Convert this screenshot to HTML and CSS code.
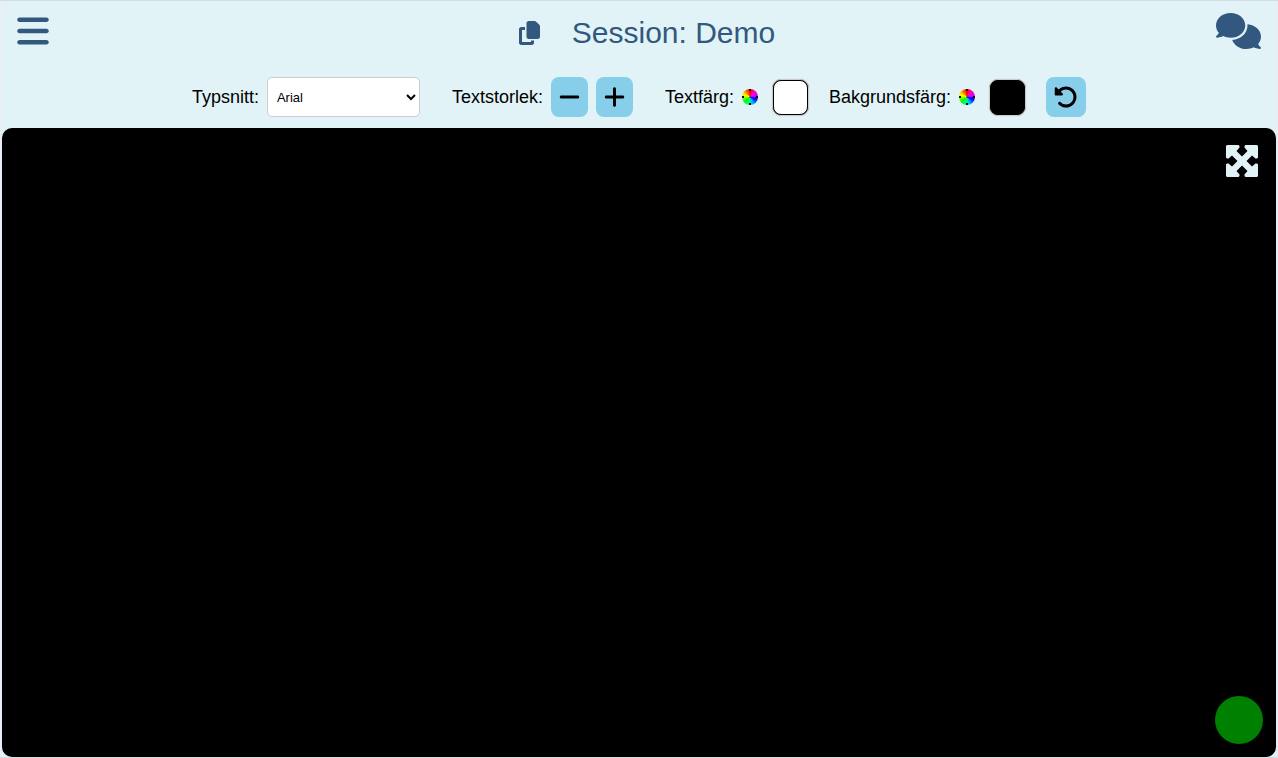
FILE: index.html
```html
<!DOCTYPE html>
<html lang="sv">
<head>
    <meta charset="utf-8">
    <meta name="viewport" content="width=device-width, initial-scale=1">
    <title>Session: Demo</title>
    <link rel="stylesheet" href="styles.css">
</head>
<body>
    <div class="page">
        <header class="header">
            <button class="iconButton" type="button" aria-label="Meny">
                <svg width="32" height="36" viewBox="0 0 448 512" fill="currentColor"><path d="M0 96c0-17.700 14.300-32 32-32h384c17.700 0 32 14.300 32 32s-14.300 32-32 32H32c-17.700 0-32-14.300-32-32zm0 160c0-17.700 14.300-32 32-32h384c17.700 0 32 14.300 32 32s-14.300 32-32 32H32c-17.700 0-32-14.300-32-32zm448 160c0 17.700-14.300 32-32 32H32c-17.700 0-32-14.300-32-32s14.300-32 32-32h384c17.700 0 32 14.300 32 32z"/></svg>
            </button>
            <div class="session">
                <button class="iconButton" type="button" aria-label="Kopiera">
                    <svg width="21" height="24" viewBox="0 0 448 512" fill="currentColor"><path d="M208 0H332.100c12.700 0 24.900 5.100 33.900 14.100l67.900 67.900c9 9 14.100 21.200 14.100 33.900V336c0 26.500-21.500 48-48 48H208c-26.500 0-48-21.500-48-48V48c0-26.500 21.500-48 48-48zM48 128h80v64H64V448H256V416h64v48c0 26.500-21.500 48-48 48H48c-26.500 0-48-21.500-48-48V176c0-26.500 21.500-48 48-48z"/></svg>
                </button>
                <h1 class="title">Session: Demo</h1>
            </div>
            <button class="iconButton chatButton" type="button" aria-label="Chatt">
                <svg width="45" height="36" viewBox="0 0 640 512" fill="currentColor"><path d="M208 352c114.900 0 208-78.800 208-176S322.900 0 208 0S0 78.800 0 176c0 38.600 14.700 74.300 39.600 103.400c-3.500 9.400-8.700 17.700-14.200 24.700c-4.800 6.200-9.700 11-13.300 14.300c-1.800 1.600-3.300 2.900-4.300 3.700c-.5 .4-.9 .7-1.100 .8l-.2 .2C1 327.200-1.400 334.400 .8 340.900S9.100 352 16 352c21.800 0 43.800-5.600 62.100-12.500c9.200-3.500 17.800-7.400 25.200-11.400C134.100 343.300 169.800 352 208 352zM448 176c0 112.300-99.100 196.900-216.500 207C255.800 457.400 336.400 512 432 512c38.200 0 73.900-8.700 104.700-23.900c7.500 4 16 7.900 25.200 11.400c18.300 6.900 40.300 12.500 62.100 12.500c6.900 0 13.100-4.500 15.200-11.100c2.100-6.600-.2-13.800-5.800-17.900l-.2-.2c-.2-.2-.6-.4-1.100-.8c-1-.8-2.500-2-4.300-3.700c-3.600-3.300-8.500-8.100-13.300-14.300c-5.500-7-10.700-15.400-14.200-24.700c24.900-29 39.600-64.700 39.600-103.400c0-92.800-84.900-168.900-192.600-175.500c.4 5.100 .6 10.300 .6 15.500z"/></svg>
            </button>
        </header>

        <div class="toolbar">
            <div class="group">
                <label for="fontSelect">Typsnitt:</label>
                <select class="fontSelect" id="fontSelect">
                    <option>Arial</option>
                    <option>Verdana</option>
                    <option>Times New Roman</option>
                    <option>Courier New</option>
                </select>
            </div>
            <div class="group" role="group" aria-labelledby="sizeLabel">
                <span id="sizeLabel">Textstorlek:</span>
                <button class="toolButton" type="button" aria-label="Minska">
                    <svg width="21" height="24" viewBox="0 0 448 512" fill="currentColor"><path d="M432 256c0 17.700-14.300 32-32 32H48c-17.700 0-32-14.300-32-32s14.300-32 32-32h352c17.700 0 32 14.300 32 32z"/></svg>
                </button>
                <button class="toolButton" type="button" aria-label="Öka">
                    <svg width="21" height="24" viewBox="0 0 448 512" fill="currentColor"><path d="M256 80c0-17.700-14.300-32-32-32s-32 14.300-32 32v144H48c-17.700 0-32 14.300-32 32s14.300 32 32 32h144v144c0 17.700 14.300 32 32 32s32-14.300 32-32V288h144c17.700 0 32-14.300 32-32s-14.300-32-32-32H256V80z"/></svg>
                </button>
            </div>
            <div class="colors">
                <div class="colorGroup">
                    <label class="group" for="textColor">Textfärg:
                        <svg class="wheel" width="16" height="16" viewBox="0 0 16 16"><path d="M7 0h2v2H7zM7 14h2v2H7zM0 7h2v2H0zM14 7h2v2h-2zM7.500 7.500h1v1h-1z"/></svg>
                    </label>
                    <input class="swatch" id="textColor" type="color" value="#ffffff">
                </div>
                <div class="colorGroup">
                    <label class="group" for="backgroundColor">Bakgrundsfärg:
                        <svg class="wheel" width="16" height="16" viewBox="0 0 16 16"><path d="M7 0h2v2H7zM7 14h2v2H7zM0 7h2v2H0zM14 7h2v2h-2zM7.500 7.500h1v1h-1z"/></svg>
                    </label>
                    <input class="swatch" id="backgroundColor" type="color" value="#000000">
                </div>
                <button class="toolButton resetButton" type="button" aria-label="Återställ">
                    <svg width="24" height="24" viewBox="0 0 512 512" fill="currentColor"><path d="M48.500 224H40c-13.300 0-24-10.700-24-24V72c0-9.700 5.800-18.500 14.800-22.200s19.300-1.700 26.200 5.200L98.600 96.600c87.600-86.500 228.700-86.200 315.800 1c87.500 87.500 87.500 229.300 0 316.800s-229.300 87.500-316.800 0c-12.500-12.500-12.500-32.800 0-45.300s32.800-12.500 45.300 0c62.500 62.500 163.800 62.500 226.300 0s62.500-163.800 0-226.300c-62.200-62.200-162.700-62.500-225.300-1L185 183c6.900 6.900 8.900 17.200 5.200 26.200s-12.500 14.800-22.200 14.800H48.500z"/></svg>
                </button>
            </div>
        </div>

        <main class="display">
            <button class="iconButton expandButton" type="button" aria-label="Helskärm">
                <svg width="32" height="32" viewBox="0 0 32 32" fill="currentColor"><path d="M1 0H12.500L13.500 1V2.500L10.500 6L16 11.500L21.500 6L18.500 2.500V1L19.500 0H31L32 1V12.500L31 13.500H29.500L26 10.500L20.500 16L26 21.500L29.500 18.500H31L32 19.500V31L31 32H19.500L18.500 31V29.500L21.500 26L16 20.500L10.500 26L13.500 29.500V31L12.500 32H1L0 31V19.500L1 18.500H2.500L6 21.500L11.500 16L6 10.500L2.500 13.500H1L0 12.500V1z"/></svg>
            </button>
            <span class="status" role="status" aria-label="Ansluten"></span>
        </main>
    </div>
</body>
</html>
```
FILE: styles.css
```css
* {
    box-sizing: border-box;
}

body {
    margin: 0;
    background-color: #e8eef6;
    color: #000;
    font-family: Arial, "Liberation Sans", sans-serif;
    font-size: 18px;
}

svg {
    display: block;
}

.page {
    display: flex;
    flex-direction: column;
    min-height: 100vh;
    border-top: 1px solid #d8dce2;
    border-bottom: 1px solid #d8dce2;
    padding: 0 2px;
    background: #e1f3f6 content-box;
}

/* header */
.header {
    display: grid;
    grid-template-columns: 1fr auto 1fr;
    align-items: start;
    padding: 12px 15px 13px;
}

.iconButton {
    justify-self: start;
    padding: 0;
    border: 0;
    background: none;
    color: #325880;
    cursor: pointer;
}

.chatButton {
    justify-self: end;
}

.session {
    display: flex;
    align-items: center;
    gap: 32px;
    padding-left: 16px;
}

.title {
    margin: 0;
    color: #325880;
    font-size: 30px;
    font-weight: normal;
    line-height: 40px;
}

/* toolbar */
.toolbar {
    display: flex;
    justify-content: center;
    align-items: center;
    gap: 32px;
    padding: 11px 0;
}

.group {
    display: flex;
    align-items: center;
    gap: 8px;
}

.colors {
    display: flex;
    align-items: center;
    gap: 20px;
}

.colorGroup {
    display: flex;
    align-items: center;
    gap: 14px;
}

.fontSelect {
    width: 153px;
    height: 40px;
    padding: 0 5px;
    border: 1px solid #ccc;
    border-radius: 5px;
    background-color: #fff;
    color: #000;
    font-family: inherit;
    font-size: 13px;
}

.toolButton {
    display: flex;
    justify-content: center;
    align-items: center;
    width: 37px;
    height: 40px;
    padding: 0;
    border: 0;
    border-radius: 8px;
    background-color: #87ceeb;
    color: #000;
    cursor: pointer;
}

.resetButton {
    width: 40px;
}

.wheel {
    border-radius: 50%;
    background: conic-gradient(#f00, #f0c 45deg, #c0f 80deg, #00f 110deg, #0af 150deg, #0f9 185deg, #0f0 230deg, #ff0 290deg, #f60 330deg, #f00);
}

.swatch {
    appearance: none;
    width: 37px;
    height: 37px;
    padding: 0;
    border: 1px solid #ccc;
    border-radius: 9px;
    background: #000;
    box-shadow: 0 0 1px #aaa;
    cursor: pointer;
}

.swatch::-webkit-color-swatch-wrapper {
    padding: 0;
}

.swatch::-webkit-color-swatch {
    border: 1px solid #000;
    border-radius: 8px;
}

/* text area */
.display {
    display: flex;
    flex: 1;
    flex-direction: column;
    justify-content: space-between;
    align-items: flex-end;
    padding: 17px 13px 13px;
    border-radius: 10px;
    background-color: #000;
}

.expandButton {
    margin-right: 5px;
    color: #e1f3f6;
}

.status {
    width: 48px;
    height: 48px;
    border-radius: 50%;
    background-color: green;
}
```
